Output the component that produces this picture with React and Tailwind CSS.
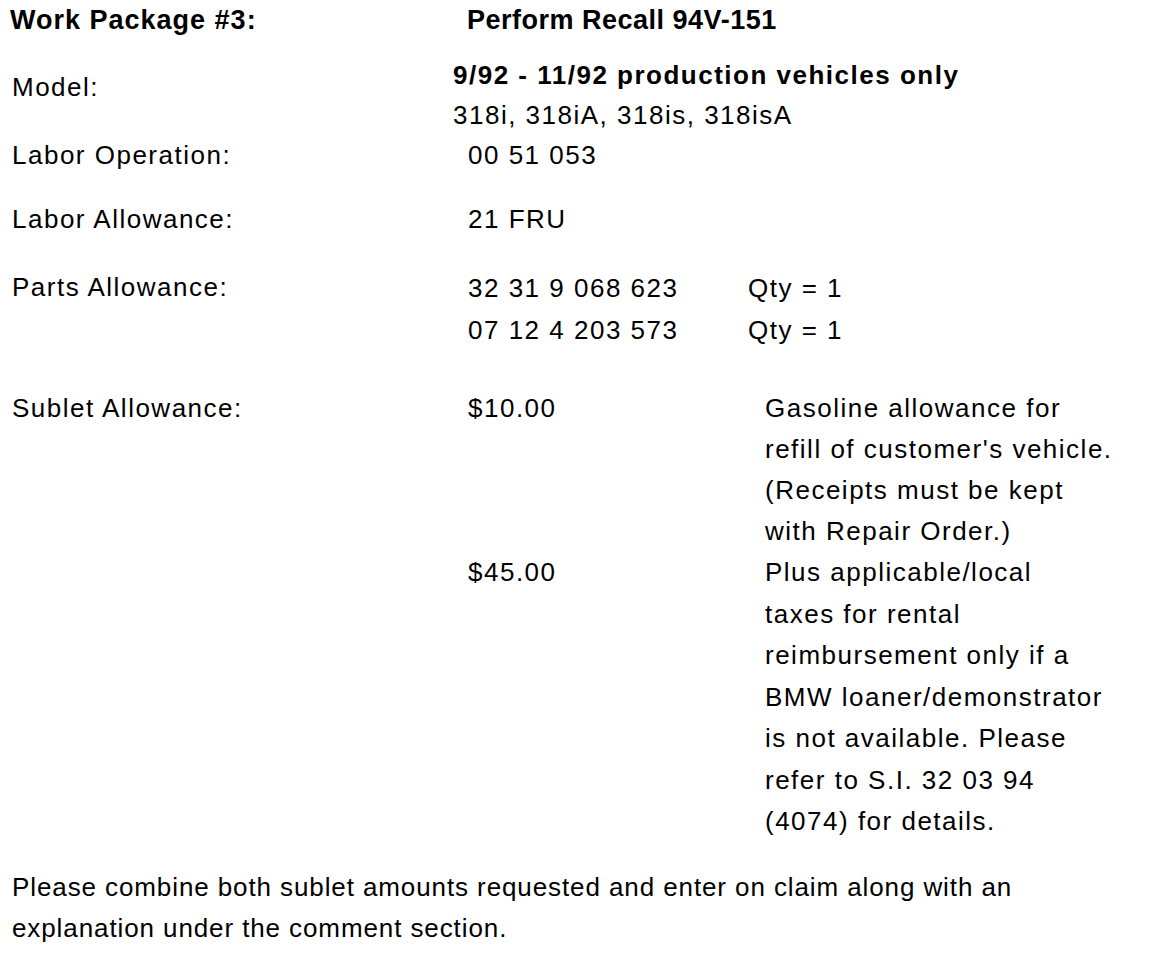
export default function App() {
  return (
    <div
      className="w-[1152px] h-[962px] bg-white text-black text-[26px] leading-[41px] tracking-[1.5px] overflow-hidden"
      style={{ fontFamily: '"Liberation Sans", Arial, sans-serif' }}
    >
      <div className="flex">
        <div className="w-[467px] pl-[10px] font-bold text-[27px] tracking-[1px]">Work Package #3:</div>
        <div className="font-bold text-[27px] tracking-[0.5px]">Perform Recall 94V-151</div>
      </div>

      <div className="flex mt-[14px]">
        <div className="w-[453px] pl-[12px] pt-[12px]">Model:</div>
        <div className="leading-[40px]">
          <div className="font-bold">9/92 - 11/92 production vehicles only</div>
          <div>318i, 318iA, 318is, 318isA</div>
        </div>
      </div>

      <div className="flex">
        <div className="w-[468px] pl-[12px]">Labor Operation:</div>
        <div>00 51 053</div>
      </div>

      <div className="flex mt-[23px]">
        <div className="w-[468px] pl-[12px]">Labor Allowance:</div>
        <div>21 FRU</div>
      </div>

      <div className="flex mt-[27px]">
        <div className="w-[468px] pl-[12px]">Parts Allowance:</div>
        <div className="leading-[42px]">
          <div className="flex">
            <div className="w-[280px]">32 31 9 068 623</div>
            <div>Qty = 1</div>
          </div>
          <div className="flex">
            <div className="w-[280px]">07 12 4 203 573</div>
            <div>Qty = 1</div>
          </div>
        </div>
      </div>

      <div className="flex mt-[37px]">
        <div className="w-[468px] pl-[12px]">Sublet Allowance:</div>
        <div>
          <div className="flex">
            <div className="w-[297px]">$10.00</div>
            <div>
              <div>Gasoline allowance for</div>
              <div>refill of customer's vehicle.</div>
              <div>(Receipts must be kept</div>
              <div>with Repair Order.)</div>
            </div>
          </div>
          <div className="flex leading-[41.5px]">
            <div className="w-[297px]">$45.00</div>
            <div>
              <div>Plus applicable/local</div>
              <div>taxes for rental</div>
              <div>reimbursement only if a</div>
              <div>BMW loaner/demonstrator</div>
              <div>is not available. Please</div>
              <div>refer to S.I. 32 03 94</div>
              <div>(4074) for details.</div>
            </div>
          </div>
        </div>
      </div>

      <div className="mt-[24px] pl-[12px] tracking-[0.9px]">
        <div>Please combine both sublet amounts requested and enter on claim along with an</div>
        <div>explanation under the comment section.</div>
      </div>
    </div>
  );
}
